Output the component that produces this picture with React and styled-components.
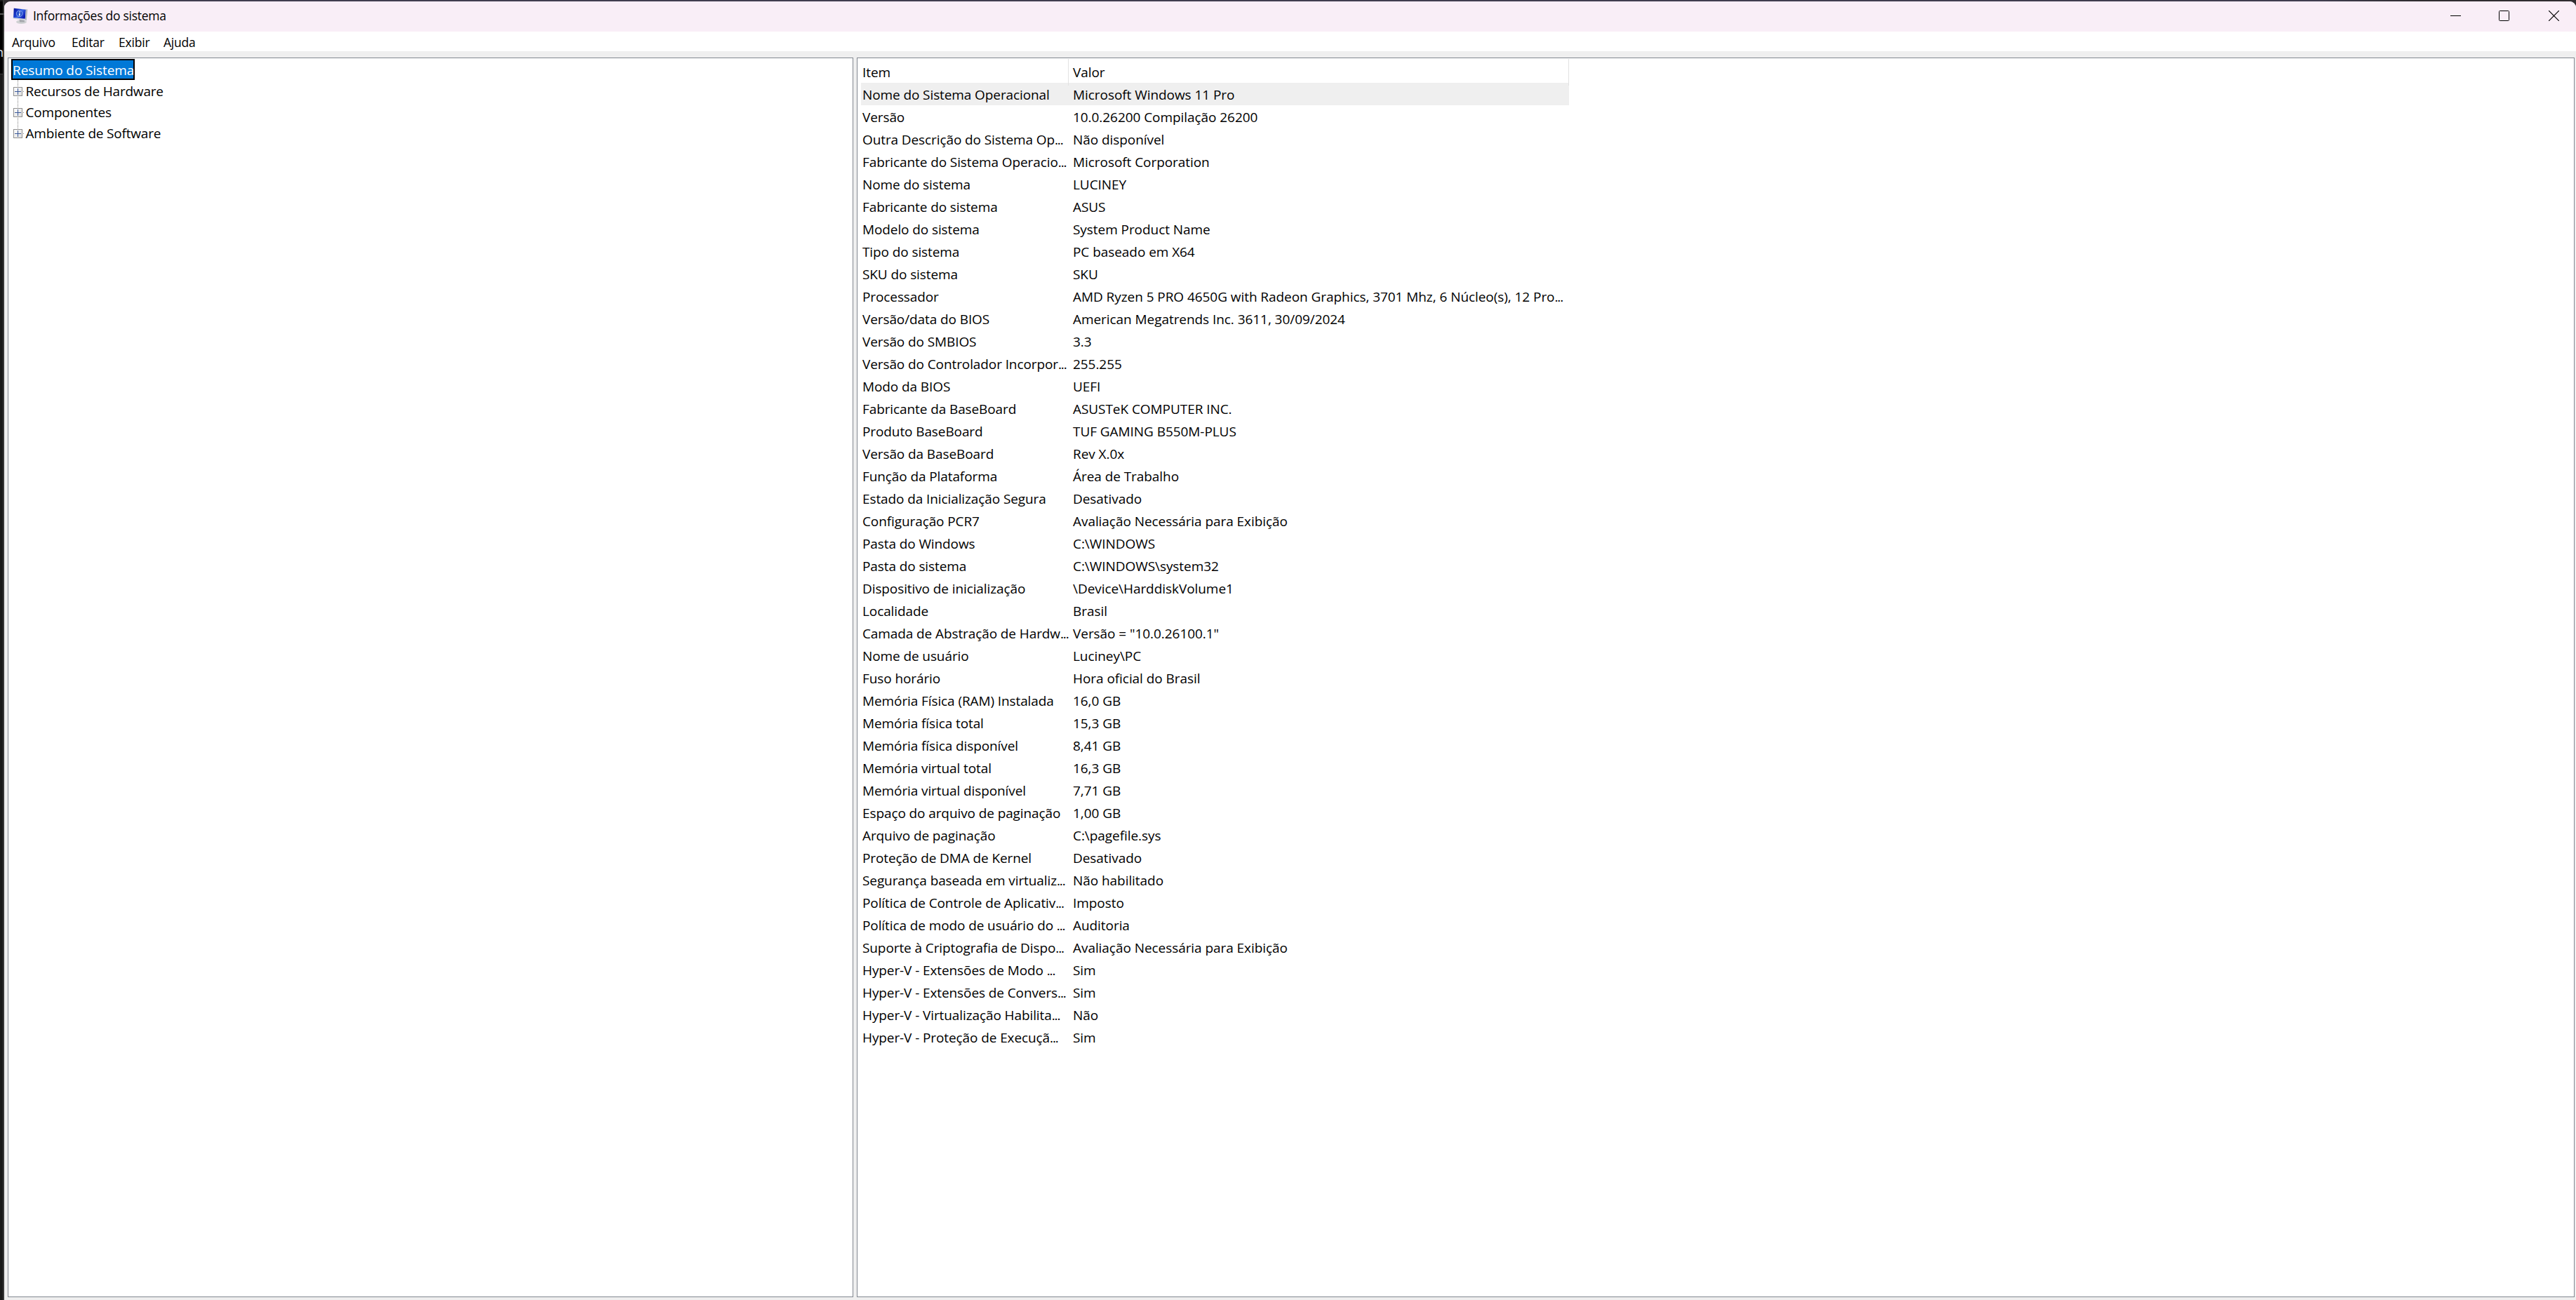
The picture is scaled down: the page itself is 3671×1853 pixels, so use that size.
import styled, { createGlobalStyle } from "styled-components";

const menuItems = [
  { label: "Arquivo", width: 85 },
  { label: "Editar", width: 67 },
  { label: "Exibir", width: 64 },
  { label: "Ajuda", width: 60 },
];

const treeItems = ["Recursos de Hardware", "Componentes", "Ambiente de Software"];

const rows = [
  ["Nome do Sistema Operacional", "Microsoft Windows 11 Pro"],
  ["Versão", "10.0.26200 Compilação 26200"],
  ["Outra Descrição do Sistema Op...", "Não disponível"],
  ["Fabricante do Sistema Operacio...", "Microsoft Corporation"],
  ["Nome do sistema", "LUCINEY"],
  ["Fabricante do sistema", "ASUS"],
  ["Modelo do sistema", "System Product Name"],
  ["Tipo do sistema", "PC baseado em X64"],
  ["SKU do sistema", "SKU"],
  ["Processador", "AMD Ryzen 5 PRO 4650G with Radeon Graphics, 3701 Mhz, 6 Núcleo(s), 12 Pro..."],
  ["Versão/data do BIOS", "American Megatrends Inc. 3611, 30/09/2024"],
  ["Versão do SMBIOS", "3.3"],
  ["Versão do Controlador Incorpor...", "255.255"],
  ["Modo da BIOS", "UEFI"],
  ["Fabricante da BaseBoard", "ASUSTeK COMPUTER INC."],
  ["Produto BaseBoard", "TUF GAMING B550M-PLUS"],
  ["Versão da BaseBoard", "Rev X.0x"],
  ["Função da Plataforma", "Área de Trabalho"],
  ["Estado da Inicialização Segura", "Desativado"],
  ["Configuração PCR7", "Avaliação Necessária para Exibição"],
  ["Pasta do Windows", "C:\\WINDOWS"],
  ["Pasta do sistema", "C:\\WINDOWS\\system32"],
  ["Dispositivo de inicialização", "\\Device\\HarddiskVolume1"],
  ["Localidade", "Brasil"],
  ["Camada de Abstração de Hardw...", 'Versão = "10.0.26100.1"'],
  ["Nome de usuário", "Luciney\\PC"],
  ["Fuso horário", "Hora oficial do Brasil"],
  ["Memória Física (RAM) Instalada", "16,0 GB"],
  ["Memória física total", "15,3 GB"],
  ["Memória física disponível", "8,41 GB"],
  ["Memória virtual total", "16,3 GB"],
  ["Memória virtual disponível", "7,71 GB"],
  ["Espaço do arquivo de paginação", "1,00 GB"],
  ["Arquivo de paginação", "C:\\pagefile.sys"],
  ["Proteção de DMA de Kernel", "Desativado"],
  ["Segurança baseada em virtualiz...", "Não habilitado"],
  ["Política de Controle de Aplicativ...", "Imposto"],
  ["Política de modo de usuário do ...", "Auditoria"],
  ["Suporte à Criptografia de Dispo...", "Avaliação Necessária para Exibição"],
  ["Hyper-V - Extensões de Modo ...", "Sim"],
  ["Hyper-V - Extensões de Convers...", "Sim"],
  ["Hyper-V - Virtualização Habilita...", "Não"],
  ["Hyper-V - Proteção de Execuçã...", "Sim"],
];

const AppIcon = () => (
  <svg width="24" height="24" viewBox="0 0 24 24">
    <defs>
      <linearGradient id="screen" x1="0" y1="0" x2="1" y2="0.6">
        <stop offset="0" stopColor="#0a149a" />
        <stop offset="0.45" stopColor="#1c3fd0" />
        <stop offset="0.6" stopColor="#3d6be6" />
        <stop offset="1" stopColor="#0b1bb4" />
      </linearGradient>
    </defs>
    <ellipse cx="12.5" cy="20.2" rx="7.5" ry="2.8" fill="#cfd1d3" />
    <path d="M9.500 16l7 1 .5 3.500h-7z" fill="#a5a8ac" />
    <path d="M1.500 0.500l19.500 2-1.500 16L0.500 15.500z" fill="#d3d7dc" />
    <path d="M1.800 0.800l17 2-1 13L1.200 14.200z" fill="url(#screen)" />
    <path d="M19 2.500l2.300 0-1.600 16-2-2z" fill="#b4b9bf" />
    <circle cx="9.700" cy="8.300" r="4.300" fill="#2450cc" stroke="#9fb6f2" strokeWidth="0.800" />
    <path d="M10.300 5.400l-.1 1.400M10 8l-.4 3.400" stroke="#fff" strokeWidth="1.600" />
  </svg>
);

// splits the trailing dots off so they can be set tighter than the text
const ListCell = ({ text }) => {
  const cut = text.endsWith("...");
  return (
    <Cell>
      {cut ? text.slice(0, -3) : text}
      {cut && <Dots>...</Dots>}
    </Cell>
  );
};

const App = () => {
  return (
    <>
      <GlobalStyle />
      <Desktop>
        <BackgroundText>n</BackgroundText>
        <Window>
          <TitleBar>
            <AppIcon />
            <Title>Informações do sistema</Title>
            <WindowControls>
              <svg width="15" height="15" viewBox="0 0 15 15">
                <path d="M0 7.500h15" stroke="#000" />
              </svg>
              <svg width="15" height="15" viewBox="0 0 15 15">
                <rect x="0.500" y="0.500" width="14" height="14" rx="1" fill="none" stroke="#000" />
              </svg>
              <CloseIcon width="15" height="15" viewBox="0 0 15 15">
                <path d="M0 0l15 15M15 0L0 15" stroke="#000" strokeWidth="1.200" />
              </CloseIcon>
            </WindowControls>
          </TitleBar>
          <MenuBar>
            {menuItems.map((item) => (
              <MenuItem key={item.label} $width={item.width}>
                {item.label}
              </MenuItem>
            ))}
          </MenuBar>
          <Panels>
            <TreePanel>
              <TreeRoot>Resumo do Sistema</TreeRoot>
              {treeItems.map((label, i) => (
                <TreeItem key={label}>
                  <Branch $last={i === treeItems.length - 1}>
                    <Expander>
                      <svg width="13" height="13" viewBox="0 0 13 13">
                        <path d="M2 6.500h9M6.500 2v9" stroke="#3c5a9a" />
                      </svg>
                    </Expander>
                  </Branch>
                  <span>{label}</span>
                </TreeItem>
              ))}
            </TreePanel>
            <ListPanel>
              <HeaderRow>
                <HeaderCell>Item</HeaderCell>
                <HeaderCell>Valor</HeaderCell>
              </HeaderRow>
              {rows.map(([item, value], i) => (
                <Row key={item} $selected={i === 0}>
                  <ListCell text={item} />
                  <ListCell text={value} />
                </Row>
              ))}
            </ListPanel>
          </Panels>
        </Window>
      </Desktop>
    </>
  );
};

const GlobalStyle = createGlobalStyle`
  * {
    box-sizing: border-box;
  }

  body {
    margin: 0;
    overflow: hidden;
    color: #000;
    font-family: "Open Sans", "Noto Sans", sans-serif;
    font-size: 19px;
    letter-spacing: -0.1px;
  }

  svg {
    display: block;
    flex: none;
  }
`;

const Desktop = styled.div`
  position: relative;
  height: 1853px;
  padding: 2px 0 0 6px;
  overflow: hidden;
  background:
    linear-gradient(#5a5a5a, #5a5a5a) 0 19px / 6px 2px no-repeat,
    linear-gradient(#3a3a3a, #3a3a3a) 0 105px / 4px 1px no-repeat,
    linear-gradient(#000, #000) 0 2px / 4px 103px no-repeat,
    linear-gradient(to right, #302c30, #403d4f 170px, #403d4f 3300px, #302c30 3440px) 6px 0 / 100% 12px no-repeat,
    linear-gradient(to right, #1a1a1a 4px, #383838 4px);
`;

/* end of a line in the window behind */
const BackgroundText = styled.span`
  position: absolute;
  left: -6px;
  top: 61px;
  color: #d8e4f0;
  font-size: 18px;
  line-height: 26px;
`;

const Window = styled.div`
  position: relative;
  height: 1851px;
  display: flex;
  flex-direction: column;
  background-color: #efefef;
  border-radius: 9px 9px 0 0;
  overflow: hidden;
`;

const TitleBar = styled.div`
  height: 43px;
  display: flex;
  align-items: center;
  padding: 0 24px 2px 12px;
  background-color: #f9eef7;
`;

const Title = styled.span`
  margin-left: 5px;
  font-size: 17.5px;
  letter-spacing: -0.27px;
  line-height: 39px;
  padding-bottom: 1px;
  white-space: nowrap;
`;

const WindowControls = styled.div`
  display: flex;
  gap: 54px;
  margin-left: auto;
`;

const CloseIcon = styled.svg`
  margin-left: 2px;
`;

const MenuBar = styled.div`
  height: 28px;
  display: flex;
  padding-left: 11px;
  background-color: #fff;
`;

const MenuItem = styled.div`
  width: ${(props) => props.$width}px;
  font-size: 17.5px;
  letter-spacing: -0.2px;
  line-height: 31px;
`;

const Panels = styled.div`
  flex: 1;
  display: grid;
  grid-template-columns: 1205px 1fr;
  gap: 5px;
  padding: 9px 2px 4px 5px;
`;

const Panel = styled.div`
  background-color: #fff;
  border: 1px solid #828790;
`;

const TreePanel = styled(Panel)`
  padding: 1px 0 0 4px;
`;

const TreeRoot = styled.div`
  width: 176px;
  height: 30px;
  background-color: #0078d7;
  border: 2px solid #000;
  color: #fff;
  line-height: 29px;
  white-space: nowrap;
`;

const TreeItem = styled.div`
  height: 30px;
  display: flex;
  letter-spacing: -0.2px;
  line-height: 33px;
  white-space: nowrap;
`;

const Branch = styled.div`
  width: 20.5px;
  padding: 10px 0 0 3px;
  background:
    repeating-linear-gradient(to bottom, #808080 0 1px, transparent 1px 2px) 9px 0 / 1px
      ${(props) => (props.$last ? "16px" : "30px")} no-repeat,
    repeating-linear-gradient(to right, #808080 0 1px, transparent 1px 2px) 17px 16px / 2px 1px no-repeat;
`;

const Expander = styled.div`
  width: 13px;
  height: 13px;
  background: linear-gradient(135deg, #fff, #dcdcdc);
  box-shadow: inset 0 0 0 1px #919191;
`;

const ListPanel = styled(Panel)`
  padding: 1px 0 0 5px;
`;

const Row = styled.div`
  width: 1009px;
  height: 32px;
  display: grid;
  grid-template-columns: 296px 1fr;
  background-color: ${(props) => (props.$selected ? "#efefef" : "transparent")};
`;

const Cell = styled.div`
  padding-left: 2px;
  line-height: 35px;
  white-space: nowrap;

  & + & {
    padding-left: 6px;
    letter-spacing: -0.06px;
  }
`;

const Dots = styled.span`
  letter-spacing: -1.1px;
`;

const HeaderRow = styled(Row)`
  height: 34px;
`;

const HeaderCell = styled(Cell)`
  border-right: 1px solid #e2e2e2;
  line-height: 38px;
`;

export default App;
